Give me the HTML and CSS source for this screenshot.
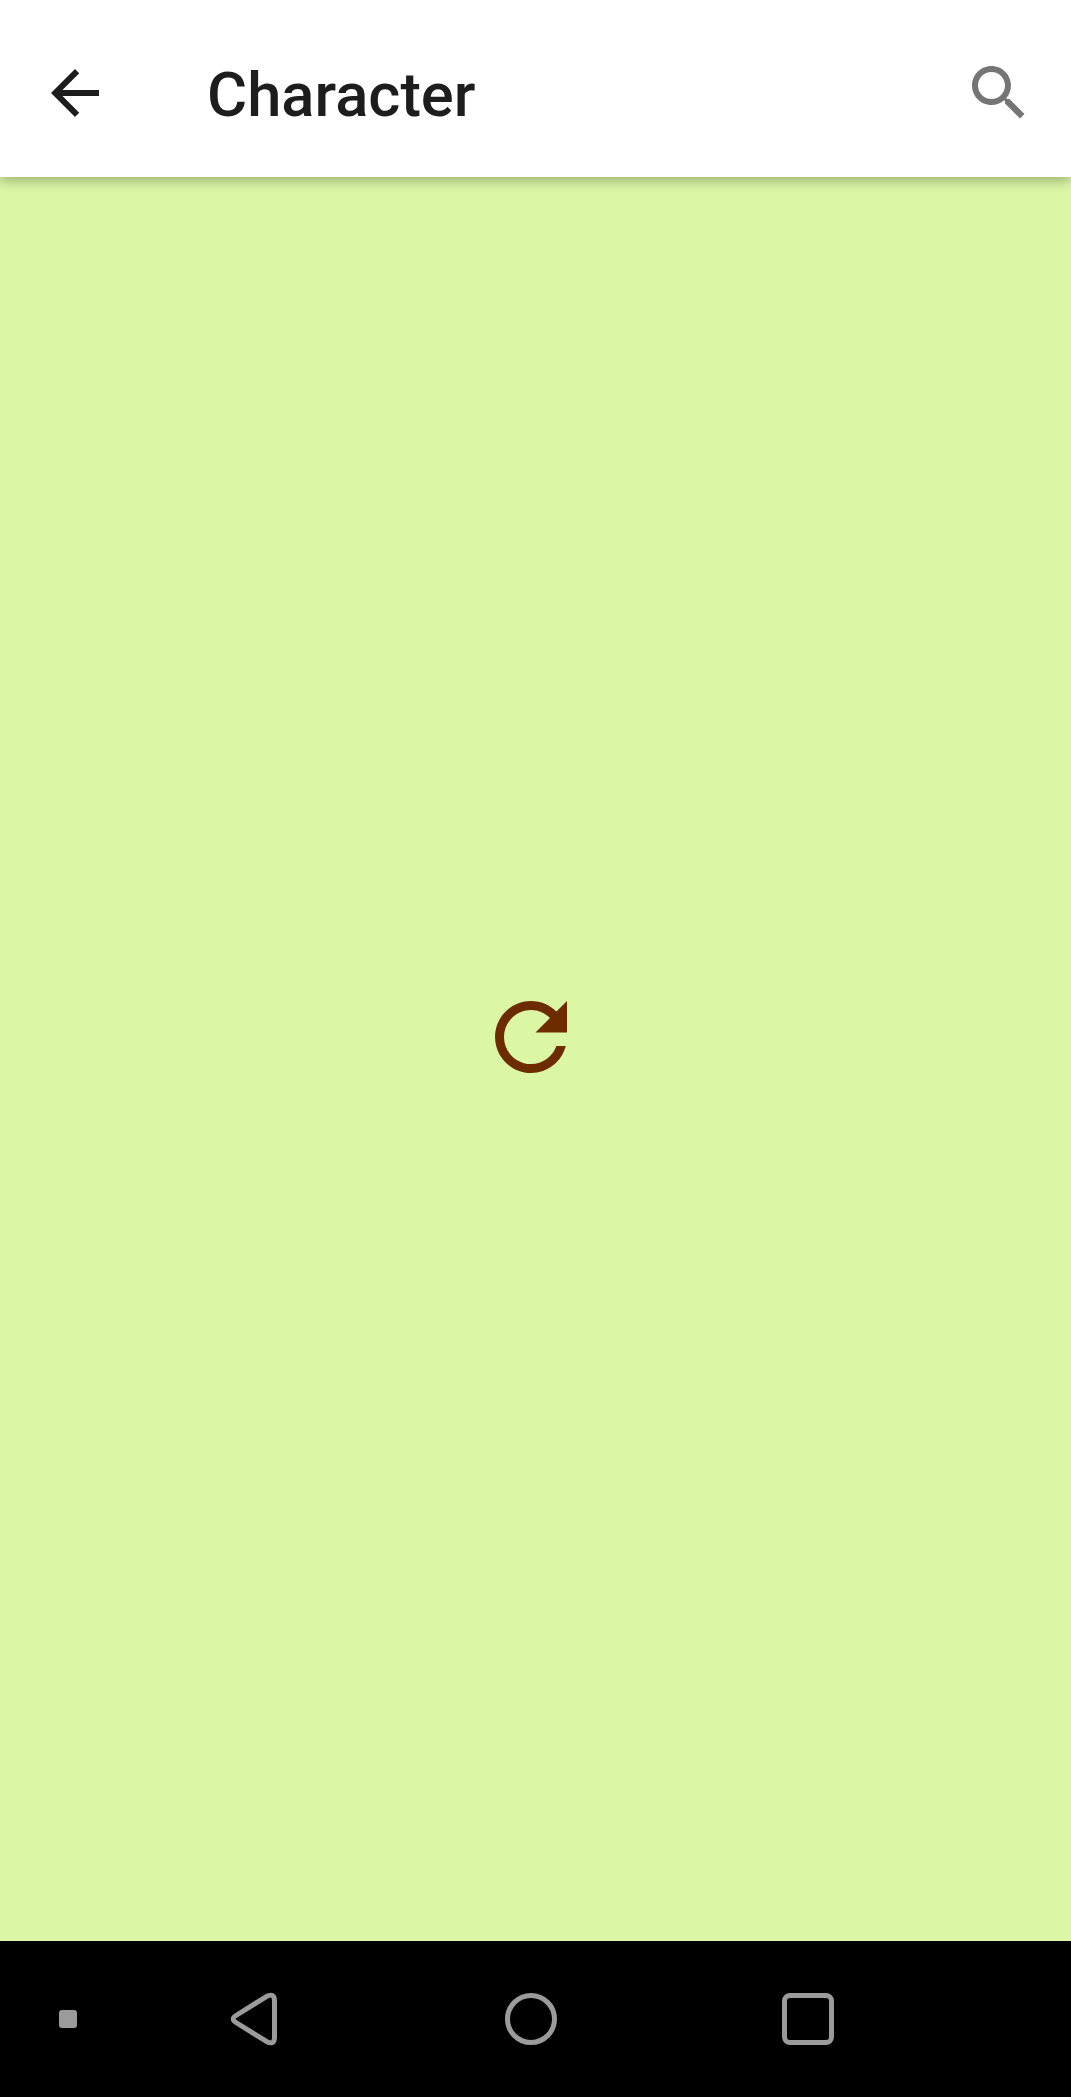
FILE: index.html
```html
<!DOCTYPE html>
<html lang="en">
<head>
    <meta charset="UTF-8">
    <meta name="viewport" content="width=device-width, initial-scale=1.0">
    <title>Character</title>
    <link rel="stylesheet" href="styles.css">
</head>
<body>
    <div class="screen">
        <header class="toolbar">
            <svg class="back-icon" viewBox="0 0 24 24"><path d="M20 11H7.83l5.59-5.59L12 4l-8 8 8 8 1.41-1.41L7.83 13H20v-2z"/></svg>
            <h1 class="title">Character</h1>
            <svg class="search-icon" viewBox="0 0 24 24"><path d="M15.5 14h-.79l-.28-.27C15.41 12.59 16 11.11 16 9.5 16 5.91 13.09 3 9.5 3S3 5.91 3 9.5 5.91 16 9.5 16c1.61 0 3.09-.59 4.23-1.57l.27.28v.79l5 4.99L20.49 19l-4.99-5zm-6 0C7.01 14 5 11.99 5 9.5S7.01 5 9.5 5 14 7.01 14 9.5 11.99 14 9.5 14z"/></svg>
        </header>
        <main class="content">
            <svg class="refresh-icon" viewBox="0 0 24 24"><path d="M17.65 6.35C16.2 4.9 14.21 4 12 4c-4.42 0-7.99 3.58-7.99 8s3.57 8 7.99 8c3.73 0 6.84-2.55 7.73-6h-2.08c-.82 2.33-3.04 4-5.65 4-3.31 0-6-2.69-6-6s2.69-6 6-6c1.66 0 3.14.69 4.22 1.78L13 11h7V4l-2.35 2.35z"/></svg>
        </main>
        <nav class="navbar">
            <span class="nav-dot"></span>
            <svg class="nav-back" viewBox="0 0 46 52"><path d="M5 22.5 L35 3.8 Q43.5 -1 43.5 8 L43.5 44 Q43.5 53 35 48.2 L5 29.5 Q-0.5 26 5 22.5 Z"/></svg>
            <span class="nav-home"></span>
            <span class="nav-recent"></span>
        </nav>
    </div>
</body>
</html>
```

FILE: styles.css
```css
* { box-sizing: border-box; }
html, body { margin: 0; padding: 0; }
body { font-family: Roboto, "Noto Sans", sans-serif; background: #000; }

.screen { display: flex; flex-direction: column; width: 1071px; height: 2097px; overflow: hidden; }

.toolbar { position: relative; z-index: 1; display: flex; align-items: center; flex: 0 0 177px; padding: 9px 36px 0 39px; background: #fff; box-shadow: 0 4px 11px rgba(0, 0, 0, 0.28); }
.back-icon { width: 72px; height: 72px; fill: #1d1d1d; }
.search-icon { width: 72px; height: 72px; fill: #757575; }
.title { flex: 1; margin: 4px 0 0 96px; font-size: 61.5px; font-weight: 500; line-height: 72px; color: #1d1d1d; }

.content { display: flex; align-items: center; justify-content: center; flex: 1; padding: 0 9px 45px 0; background: #dbf7a5; }
.refresh-icon { width: 108px; height: 108px; fill: #6d2c00; }

.navbar { display: flex; align-items: center; flex: 0 0 156px; padding-left: 59px; background: #000; }
.nav-dot { width: 18px; height: 18px; border-radius: 3px; background: #9b9b9b; }
.nav-back { width: 46px; height: 52px; margin-left: 154px; fill: none; stroke: #9b9b9b; stroke-width: 5; overflow: visible; }
.nav-home { width: 52px; height: 52px; margin-left: 228px; border: 5px solid #9b9b9b; border-radius: 50%; }
.nav-recent { width: 52px; height: 52px; margin-left: 225px; border: 5px solid #9b9b9b; border-radius: 8px; }
```
